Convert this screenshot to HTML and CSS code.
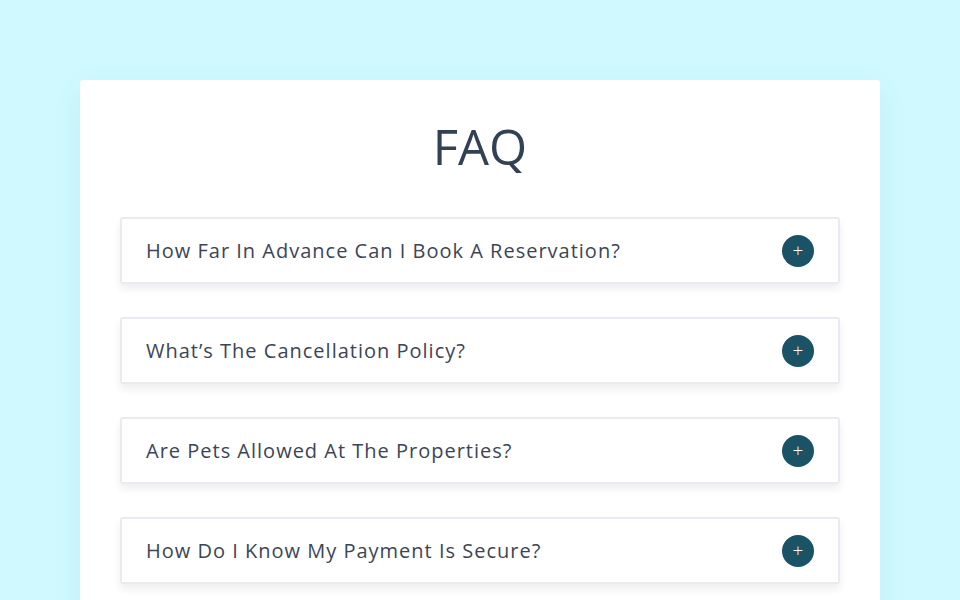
FILE: index.html
```html
<!DOCTYPE html>
<html>
<head>
<meta charset="utf-8">
<link rel="stylesheet" href="styles.css">
</head>
<body>
<main class="card">
  <h1 class="title">FAQ</h1>
  <div class="list">
    <div class="item"><span class="q">How Far In Advance Can I Book A Reservation?</span><span class="btn">+</span></div>
    <div class="item"><span class="q">What’s The Cancellation Policy?</span><span class="btn">+</span></div>
    <div class="item"><span class="q">Are Pets Allowed At The Properties?</span><span class="btn">+</span></div>
    <div class="item"><span class="q">How Do I Know My Payment Is Secure?</span><span class="btn">+</span></div>
  </div>
</main>
</body>
</html>
```
FILE: styles.css
```css
html, body { margin: 0; padding: 0; }
body {
  background: #cff9fe;
  font-family: "Open Sans", sans-serif;
  height: 600px;
  overflow: hidden;
  padding-top: 80px;
  box-sizing: border-box;
}
.card {
  width: 800px;
  margin: 0 auto;
  background: #fff;
  border-radius: 3px;
  box-shadow: 0 10px 30px rgba(0, 120, 140, 0.08);
  padding: 31px 40px 60px;
  box-sizing: border-box;
  min-height: 600px;
}
.title {
  margin: 0;
  text-align: center;
  font-weight: 400;
  font-size: 49px;
  line-height: 70px;
  color: #334155;
}
.list {
  margin-top: 36px;
  display: flex;
  flex-direction: column;
  gap: 33px;
}
.item {
  height: 67px;
  box-sizing: border-box;
  border: 2px solid #e8ebef;
  border-radius: 3px;
  box-shadow: 0 5px 8px rgba(0, 0, 0, 0.07);
  display: flex;
  align-items: center;
  justify-content: space-between;
  padding: 0 24px 0 24px;
}
.q {
  font-size: 20px;
  letter-spacing: 1px;
  color: #3b4556;
}
.btn {
  width: 32px;
  height: 32px;
  border-radius: 50%;
  background: #1a5266;
  color: #fff;
  display: flex;
  align-items: center;
  justify-content: center;
  font-size: 19px;
  font-weight: 300;
  line-height: 1;
}
```
